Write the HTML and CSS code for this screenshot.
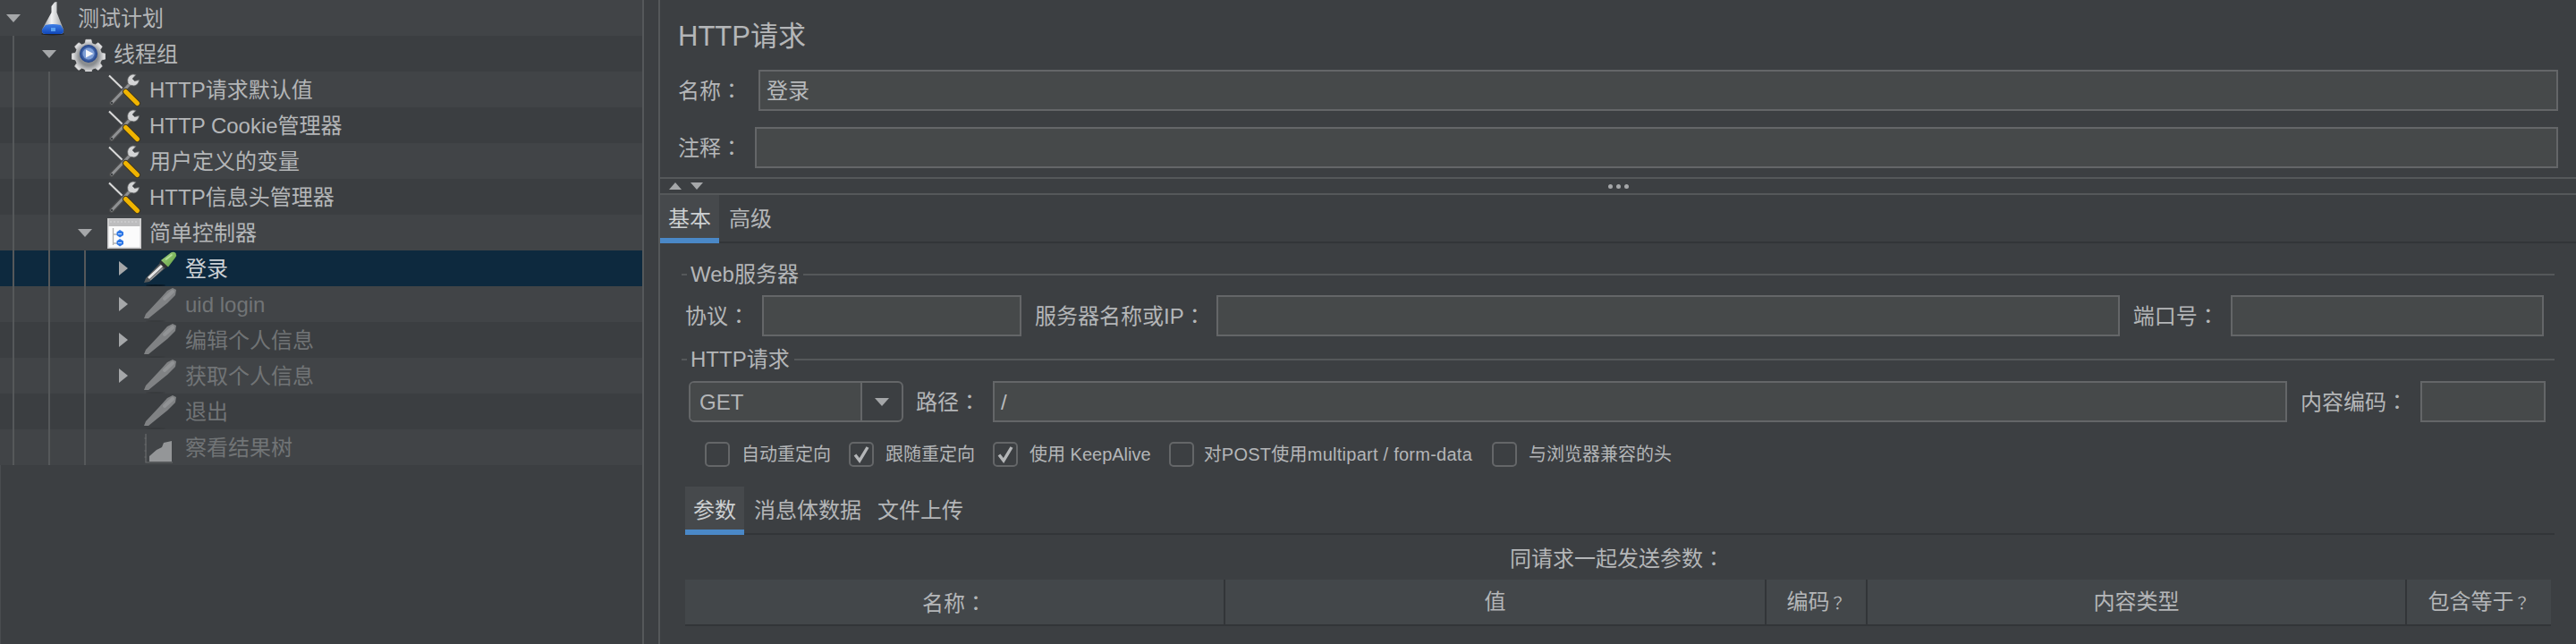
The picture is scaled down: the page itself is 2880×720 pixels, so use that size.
FILE: index.html
```html
<!DOCTYPE html>
<html lang="zh-CN">
<head>
<meta charset="utf-8">
<title>HTTP请求</title>
<link rel="stylesheet" href="styles.css">
</head>
<body>
<svg class="defs" aria-hidden="true">
  <defs>
    <linearGradient id="glass" x1="0" x2="1" y1="0" y2="0"><stop offset="0" stop-color="#8d9093"/><stop offset=".45" stop-color="#f2f3f4"/><stop offset="1" stop-color="#9b9ea1"/></linearGradient>
    <linearGradient id="liquid" x1="0" x2="0" y1="0" y2="1"><stop offset="0" stop-color="#3f7fe6"/><stop offset="1" stop-color="#0f46b8"/></linearGradient>
    <radialGradient id="gearfill"><stop offset=".55" stop-color="#8a8d90"/><stop offset="1" stop-color="#eeeeef"/></radialGradient>
    <radialGradient id="hub"><stop offset=".3" stop-color="#6f93cf"/><stop offset="1" stop-color="#1e3f86"/></radialGradient>
    <linearGradient id="bulb" x1="0" x2="1" y1="0" y2="1"><stop offset="0" stop-color="#a6d486"/><stop offset="1" stop-color="#5f9f3e"/></linearGradient>
    <symbol id="i-flask" viewBox="0 0 38 40">
      <ellipse cx="19" cy="38" rx="13" ry="1.5" fill="#202224"/>
      <path d="M21 2.500 L23.500 2 L23.500 14 L31 33 Q32 38 27 38 L11 38 Q6 38 7 33 L17.500 14 L17.500 7Z" fill="url(#glass)"/>
      <path d="M10.800 28 Q19 26 27.800 28 L31 33 Q32 38 27 38 L11 38 Q6 38 7 33Z" fill="url(#liquid)"/>
      <path d="M17 31 h5 v4 h-5z" fill="#5aa0f0"/>
    </symbol>
    <symbol id="i-gear" viewBox="0 0 38 40">
      <path d="M15.500 2h7l1 5 4 1.700 4.300-2.700 5 5-2.700 4.300 1.700 4 5 1v7l-5 1-1.700 4 2.700 4.300-5 5-4.300-2.700-4 1.700-1 5h-7l-1-5-4-1.700-4.300 2.700-5-5 2.700-4.300-1.700-4-5-1v-7l5-1 1.700-4-2.700-4.300 5-5 4.300 2.700 4-1.700z" transform="translate(2.600 2.600) scale(.86)" fill="url(#gearfill)" stroke="#c9cacb" stroke-width="1"/>
      <circle cx="19" cy="20" r="10" fill="url(#hub)"/>
      <circle cx="19" cy="20" r="6.500" fill="#7f9fd6"/>
      <path d="M16 15.500 L24.500 20 L16 24.500Z" fill="#f4f6fa"/>
    </symbol>
    <symbol id="i-tools" viewBox="0 0 38 40">
      <path d="M2 4.500 L20 22" stroke="#4c4f51" stroke-width="3.200"/>
      <path d="M2 4.500 L20 22" stroke="#dcdcdc" stroke-width="1.800"/>
      <path d="M5 35 L25 14" stroke="#4a4b4c" stroke-width="6" stroke-linecap="round"/>
      <path d="M5 35 L25 14" stroke="#8f9193" stroke-width="3.200" stroke-linecap="round"/>
      <circle cx="5" cy="35" r="1.200" fill="#3c3f41"/>
      <path d="M25 4.500 A7.500 7.500 0 0 0 24.500 15 L30 16 A7.500 7.500 0 0 0 35.500 9.500 L30.500 10.500 L28 8 L32 3.500 Q28 2 25 4.500Z" fill="#d4d5d6" stroke="#66686a" stroke-width=".8"/>
      <path d="M20.500 22.500 L33.500 35.500" stroke="#40371f" stroke-width="7" stroke-linecap="round"/>
      <path d="M20.500 22.500 L33.500 35.500" stroke="#f0b400" stroke-width="5.200" stroke-linecap="round"/>
    </symbol>
    <symbol id="i-ctrl" viewBox="0 0 38 40">
      <path d="M0 4h38v34H0z" fill="#c9c9ca"/>
      <path d="M1.500 5h35v31.500h-35z" fill="#fbfbfb"/>
      <path d="M1.500 5h35v8h-35z" fill="#bdbdbe"/>
      <path d="M3 8h32" stroke="#d6d6d7" stroke-width="1" stroke-dasharray="2 2"/>
      <path d="M6.500 15v19M6.500 22h6M6.500 32h6" stroke="#b3b3b3" stroke-width="1.300" fill="none"/>
      <path d="M14 17 L18 19.500 V23 L14 25.500 L10.500 23 V19.500Z" fill="#2f78e6"/>
      <path d="M14 27 L18 29.500 V33 L14 35.500 L10.500 33 V29.500Z" fill="#2f78e6"/>
      <path d="M12 21.500h4M12 31.500h4" stroke="#cfe0f8" stroke-width="1.200"/>
    </symbol>
    <symbol id="i-pipette" viewBox="0 0 38 40">
      <ellipse cx="14" cy="39" rx="11" ry="1" fill="#081824"/>
      <path d="M1 36 L3 31 L19 14 L25 19.500 L7 35Z" fill="#55585a"/>
      <path d="M6 31 L21 17" stroke="#e6e6e6" stroke-width="3"/>
      <path d="M8 33 L22 20" stroke="#97999b" stroke-width="1.500"/>
      <path d="M18 13.500 L21 10 L28 17 L25 20.500Z" fill="#2f3133"/>
      <path d="M20 11 L31 2.500 Q34 1 36.500 3 Q38 5.500 36 8 L28 18.500Z" fill="url(#bulb)"/>
      <path d="M25.500 10 L32 5" stroke="#b9e09c" stroke-width="1.600" stroke-linecap="round"/>
    </symbol>
    <symbol id="i-pipette-off" viewBox="0 0 38 40">
      <ellipse cx="14" cy="39" rx="11" ry=".8" fill="#36393b"/>
      <path d="M1 36 L3 31 L18 15 L27 5 L33 2 L37 4 L36 10 L27 19 L22 23 L6 36Z" fill="#808284"/>
      <path d="M24 14 L33 6" stroke="#919395" stroke-width="4" stroke-linecap="round"/>
    </symbol>
    <symbol id="i-graph" viewBox="0 0 38 40">
      <path d="M3 5 V37 H33" fill="none" stroke="#696b6d" stroke-width="1.200"/>
      <path d="M1.500 10h2M1.500 17h2M1.500 24h2M1.500 31h2" stroke="#696b6d" stroke-width="1"/>
      <path d="M7 36 V30 L15 23 L21 20 L23 15 L32 13 V36Z" fill="#949698"/>
    </symbol>
  </defs>
</svg>

<div class="app">
  <aside class="tree">
    <div class="guide guide-a"></div>
    <div class="guide guide-b"></div>
    <div class="guide guide-c"></div>

    <div class="row"><span class="tw down"></span><svg class="ico"><use href="#i-flask"/></svg><span class="name">测试计划</span></div>
    <div class="row l1"><span class="tw down"></span><svg class="ico"><use href="#i-gear"/></svg><span class="name">线程组</span></div>
    <div class="row l2"><span class="tw"></span><svg class="ico"><use href="#i-tools"/></svg><span class="name">HTTP请求默认值</span></div>
    <div class="row l2"><span class="tw"></span><svg class="ico"><use href="#i-tools"/></svg><span class="name">HTTP Cookie管理器</span></div>
    <div class="row l2"><span class="tw"></span><svg class="ico"><use href="#i-tools"/></svg><span class="name">用户定义的变量</span></div>
    <div class="row l2"><span class="tw"></span><svg class="ico"><use href="#i-tools"/></svg><span class="name">HTTP信息头管理器</span></div>
    <div class="row l2"><span class="tw down"></span><svg class="ico"><use href="#i-ctrl"/></svg><span class="name">简单控制器</span></div>
    <div class="row l3 selected"><span class="tw right"></span><svg class="ico"><use href="#i-pipette"/></svg><span class="name">登录</span></div>
    <div class="row l3 off"><span class="tw right"></span><svg class="ico"><use href="#i-pipette-off"/></svg><span class="name">uid login</span></div>
    <div class="row l3 off"><span class="tw right"></span><svg class="ico"><use href="#i-pipette-off"/></svg><span class="name">编辑个人信息</span></div>
    <div class="row l3 off"><span class="tw right"></span><svg class="ico"><use href="#i-pipette-off"/></svg><span class="name">获取个人信息</span></div>
    <div class="row l3 off"><span class="tw"></span><svg class="ico"><use href="#i-pipette-off"/></svg><span class="name">退出</span></div>
    <div class="row l3 off"><span class="tw"></span><svg class="ico"><use href="#i-graph"/></svg><span class="name">察看结果树</span></div>
  </aside>

  <main class="panel">
    <h1 class="title">HTTP请求</h1>
    <div class="meta name-row"><label class="lbl">名称<span class="c" lang="zh-TW">：</span></label><div class="field grow">登录</div></div>
    <div class="meta note-row"><label class="lbl">注释<span class="c" lang="zh-TW">：</span></label><div class="field grow"></div></div>

    <div class="splitter">
      <div class="steppers"><span class="up"></span><span class="dn"></span></div>
      <div class="dots"><i></i><i></i><i></i></div>
      <div></div>
    </div>

    <div class="tabs main-tabs">
      <div class="tab active">基本</div>
      <div class="tab">高级</div>
    </div>

    <section class="content">
      <div class="group-head"><span class="tick"></span><span class="group-title">Web服务器</span><span class="rule"></span></div>
      <div class="form-row server-row">
        <label class="lbl">协议<span class="c" lang="zh-TW">：</span></label><div class="field w-proto"></div>
        <label class="lbl">服务器名称或IP<span class="c" lang="zh-TW">：</span></label><div class="field w-host"></div>
        <label class="lbl">端口号<span class="c" lang="zh-TW">：</span></label><div class="field w-port"></div>
      </div>

      <div class="group-head second"><span class="tick"></span><span class="group-title">HTTP请求</span><span class="rule"></span></div>
      <div class="form-row request-row">
        <div class="combo"><span class="combo-val">GET</span><span class="combo-btn"><span class="combo-arrow"></span></span></div>
        <label class="lbl">路径<span class="c" lang="zh-TW">：</span></label><div class="field w-path">/</div>
        <label class="lbl">内容编码<span class="c" lang="zh-TW">：</span></label><div class="field w-enc"></div>
      </div>

      <div class="checks">
        <div class="check"><span class="box"></span><span>自动重定向</span></div>
        <div class="check"><span class="box"><svg class="tickmark" viewBox="0 0 24 24"><path d="M5 12.500 L10 19 L19 4"/></svg></span><span>跟随重定向</span></div>
        <div class="check"><span class="box"><svg class="tickmark" viewBox="0 0 24 24"><path d="M5 12.500 L10 19 L19 4"/></svg></span><span>使用 KeepAlive</span></div>
        <div class="check wide"><span class="box"></span><span>对POST使用multipart / form-data</span></div>
        <div class="check"><span class="box"></span><span>与浏览器兼容的头</span></div>
      </div>

      <div class="tabs sub-tabs">
        <div class="tab active">参数</div>
        <div class="tab">消息体数据</div>
        <div class="tab">文件上传</div>
      </div>

      <div class="caption">同请求一起发送参数<span class="c" lang="zh-TW">：</span></div>

      <div class="table-head">
        <div class="th col-name">名称<span class="c" lang="zh-TW">：</span></div>
        <div class="th col-value">值</div>
        <div class="th col-enc">编码<span class="c q" lang="zh-TW">？</span></div>
        <div class="th col-type">内容类型</div>
        <div class="th col-eq">包含等于<span class="c q" lang="zh-TW">？</span></div>
      </div>
    </section>
  </main>
</div>
</body>
</html>
```
FILE: styles.css
```css
* { box-sizing: border-box; }
html, body { margin: 0; height: 100%; overflow: hidden; }
body {
  background: #3c3f42;
  color: #b4b6b8;
  font: 24px/1.2 "Liberation Sans", "Noto Sans CJK SC", sans-serif;
}
.defs { display: block; width: 0; height: 0; }
.app { display: flex; height: 720px; }

/* tree */
.tree {
  position: relative;
  flex: 0 0 720px;
  border-left: 1px solid #494c4f;
  border-right: 2px solid #55585a;
}
.row {
  display: flex;
  align-items: center;
  height: 40px;
  white-space: nowrap;
  margin-left: -1px;
}
.row:nth-child(even) { background: #414447; }
.row:nth-child(odd) { background: #3b3e41; }
.l1 { padding-left: 40px; }
.l2 { padding-left: 80px; }
.l3 { padding-left: 120px; }
.row.selected { background: #0d293e; color: #cdd2d6; }
.row.off { color: #717476; }
.name { padding-top: 2px; }
.tw { flex: 0 0 30px; display: flex; justify-content: center; margin-right: 10px; }
.tw.down::before {
  content: "";
  border-style: solid;
  border-width: 9px 8.5px 0;
  border-color: #a5a7a9 transparent transparent;
}
.tw.right::before {
  content: "";
  margin-left: 5px;
  border-style: solid;
  border-width: 8.5px 0 8.5px 10px;
  border-color: transparent transparent transparent #a5a7a9;
}
.ico { flex: 0 0 38px; width: 38px; height: 40px; margin-right: 9px; }
.guide { position: absolute; bottom: 200px; width: 2px; background: #55585a; z-index: 1; }
.guide-a { left: 13px; top: 40px; }
.guide-b { left: 53px; top: 80px; }
.guide-c { left: 93px; top: 280px; }

/* right panel */
.panel {
  flex: 1;
  margin-left: 16px;
  border-left: 2px solid #55585a;
  min-width: 0;
}
.title {
  margin: 0;
  height: 78px;
  padding: 22px 0 0 20px;
  font-size: 31px;
  font-weight: 400;
  line-height: 38px;
}
.meta { display: flex; align-items: center; height: 46px; padding: 0 20px; }
.name-row .lbl { width: 90px; }
.note-row { margin-top: 18px; }
.note-row .lbl { width: 86px; }
.lbl { white-space: nowrap; flex: none; }
.c { font-family: "Noto Sans CJK TC", sans-serif; }
.field {
  height: 46px;
  border: 2px solid #646668;
  background: #46494a;
  padding: 0 0 0 7px;
  line-height: 44px;
  color: #b8babc;
  flex: none;
}
.grow { flex: 1; }

.splitter {
  display: grid;
  grid-template-columns: 1fr auto 1fr;
  align-items: center;
  height: 20px;
  margin-top: 10px;
  border-top: 2px solid #55585a;
  border-bottom: 2px solid #55585a;
}
.steppers { display: flex; gap: 10px; padding-left: 10px; }
.up { border-style: solid; border-width: 0 7px 8px; border-color: transparent transparent #a5a7a9; }
.dn { border-style: solid; border-width: 8px 7px 0; border-color: #a5a7a9 transparent transparent; }
.dots { display: flex; gap: 4px; }
.dots i { width: 5px; height: 5px; border-radius: 50%; background: #a5a7a9; }

.tabs { display: flex; height: 54px; border-bottom: 2px solid #323538; }
.tab { height: 54px; padding: 0 9px; line-height: 54px; flex: none; }
.tab.active {
  background: #46494c;
  border-bottom: 6px solid #4a88c7;
  color: #cdd0d2;
  margin-right: 2px;
}

.content { padding: 0 24px 0 28px; }
.group-head { display: flex; align-items: center; height: 36px; margin-top: 17px; margin-left: -4px; line-height: 38px; }
.group-head.second { margin-top: 8px; }
.tick { width: 6px; height: 2px; background: #55585a; }
.group-title { padding: 0 5px 0 4px; }
.rule { flex: 1; height: 2px; background: #55585a; }

.form-row { display: flex; align-items: center; height: 46px; }
.server-row { margin-top: 5px; }
.w-proto { width: 290px; margin-left: 14px; margin-right: 15px; }
.w-host { width: 1010px; margin-left: 12px; margin-right: 15px; }
.w-port { width: 350px; margin-left: 13px; }
.request-row { margin-top: 6px; margin-left: 4px; }
.combo {
  display: flex;
  width: 240px;
  height: 46px;
  border: 2px solid #646668;
  border-radius: 6px;
  margin-right: 14px;
  flex: none;
}
.combo-val { flex: 1; background: #46494a; padding-left: 10px; line-height: 44px; border-radius: 4px 0 0 4px; }
.combo-btn { width: 46px; border-left: 2px solid #646668; display: flex; align-items: center; justify-content: center; }
.combo-arrow { border-style: solid; border-width: 9px 8.5px 0; border-color: #a5a7a9 transparent transparent; }
.w-path { width: 1447px; margin-left: 14px; margin-right: 15px; }
.w-enc { width: 140px; margin-left: 14px; }

.checks { display: flex; gap: 20px; margin-top: 22px; padding-left: 22px; font-size: 20px; height: 28px; align-items: center; }
.check { display: flex; align-items: center; gap: 13px; white-space: nowrap; line-height: 30px; }
.check.wide { gap: 11px; letter-spacing: .25px; margin-right: 2px; }
.box {
  width: 28px;
  height: 28px;
  border: 2px solid #646668;
  border-radius: 5px;
  display: flex;
}
.tickmark { width: 24px; height: 24px; fill: none; stroke: #b4b6b8; stroke-width: 3.4; }

.sub-tabs { margin-top: 22px; }
.caption { height: 50px; line-height: 50px; text-align: center; margin-right: 6px; }
.table-head { display: flex; height: 52px; width: 2086px; background: #43474a; border-bottom: 2px solid #323538; }
.th { height: 50px; line-height: 50px; text-align: center; border-right: 2px solid #323538; }
.th:last-child { border-right: 0; }
.col-name { width: 604px; }
.col-value { width: 605px; }
.col-enc { width: 113px; }
.col-type { width: 603px; }
.col-eq { flex: 1; }
.q { font-size: 18px; }
```
